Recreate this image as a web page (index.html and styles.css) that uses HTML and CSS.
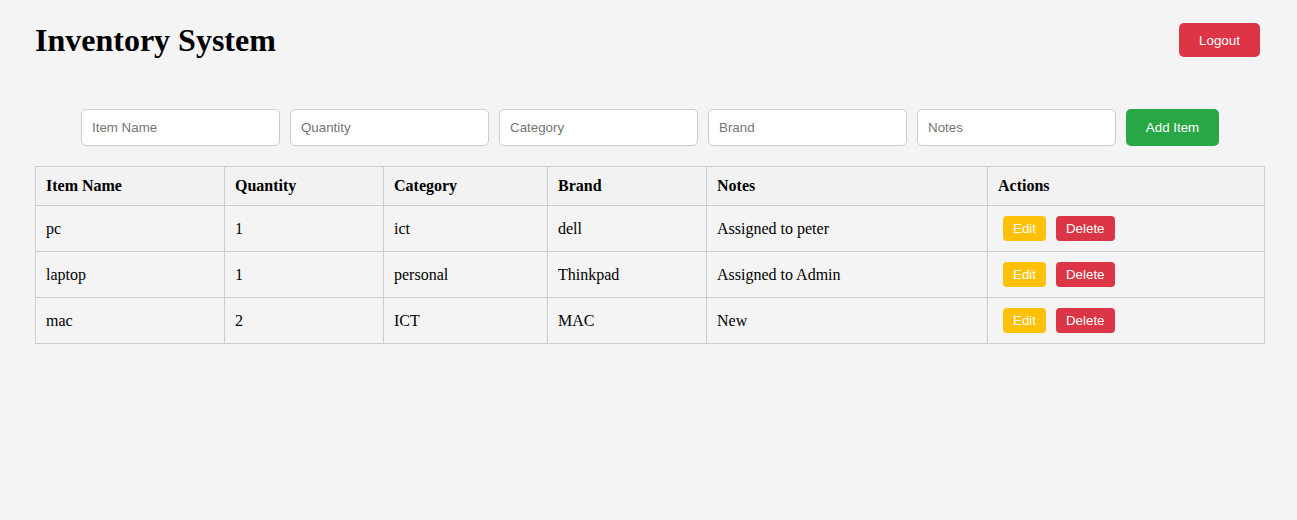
FILE: index.html
```html
<!DOCTYPE html>
<html>
<head>
<meta charset="utf-8">
<title>Inventory System</title>
<link rel="stylesheet" href="styles.css">
</head>
<body>
<div class="page">
  <header class="header">
    <h1 class="title">Inventory System</h1>
    <button class="btn btn-logout">Logout</button>
  </header>
  <form class="add-form">
    <input class="field" type="text" placeholder="Item Name">
    <input class="field" type="text" placeholder="Quantity">
    <input class="field" type="text" placeholder="Category">
    <input class="field" type="text" placeholder="Brand">
    <input class="field" type="text" placeholder="Notes">
    <button type="button" class="btn btn-add">Add Item</button>
  </form>
  <table class="items">
    <colgroup>
      <col class="c1"><col class="c2"><col class="c3"><col class="c4"><col class="c5"><col class="c6">
    </colgroup>
    <thead>
      <tr><th>Item Name</th><th>Quantity</th><th>Category</th><th>Brand</th><th>Notes</th><th>Actions</th></tr>
    </thead>
    <tbody>
      <tr><td>pc</td><td>1</td><td>ict</td><td>dell</td><td>Assigned to peter</td><td><button class="btn btn-edit">Edit</button><button class="btn btn-delete">Delete</button></td></tr>
      <tr><td>laptop</td><td>1</td><td>personal</td><td>Thinkpad</td><td>Assigned to Admin</td><td><button class="btn btn-edit">Edit</button><button class="btn btn-delete">Delete</button></td></tr>
      <tr><td>mac</td><td>2</td><td>ICT</td><td>MAC</td><td>New</td><td><button class="btn btn-edit">Edit</button><button class="btn btn-delete">Delete</button></td></tr>
    </tbody>
  </table>
</div>
</body>
</html>
```
FILE: styles.css
```css
html, body {
  margin: 0;
  padding: 0;
  background: #f4f4f4;
}
body {
  font-family: "Liberation Serif", "Times New Roman", serif;
  color: #000;
}
.page {
  width: 1230px;
  margin-left: 35px;
}
.header {
  display: flex;
  justify-content: space-between;
  align-items: center;
  height: 80px;
  padding-right: 5px;
}
.title {
  margin: 0;
  font-size: 32px;
  font-weight: bold;
  line-height: 37px;
}
.btn {
  font-family: "Liberation Sans", Arial, sans-serif;
  font-size: 13.333px;
  color: #fff;
  border: none;
  cursor: pointer;
  line-height: 15px;
}
.btn-logout {
  background: #dc3545;
  width: 81px;
  height: 34px;
  padding: 0;
  border-radius: 5px;
}
.add-form {
  display: flex;
  justify-content: center;
  gap: 10px;
  margin-top: 29px;
  height: 37px;
}
.field {
  box-sizing: border-box;
  width: 199px;
  height: 37px;
  padding: 10px;
  border: 1px solid #ccc;
  border-radius: 5px;
  background: #fff;
  font-family: "Liberation Sans", Arial, sans-serif;
  font-size: 13.333px;
  outline: none;
}
.field::placeholder {
  color: #757575;
}
.btn-add {
  background: #28a745;
  width: 93px;
  height: 37px;
  padding: 0;
  border-radius: 5px;
}
.items {
  margin-top: 20px;
  width: 1229px;
  border-collapse: collapse;
  table-layout: fixed;
}
.c1 { width: 189px; }
.c2 { width: 159px; }
.c3 { width: 164px; }
.c4 { width: 159px; }
.c5 { width: 281px; }
.c6 { width: 277px; }
.items th, .items td {
  border: 1px solid #ccc;
  padding: 10px;
  text-align: left;
  font-size: 16px;
  line-height: 18px;
}
.items th {
  background: #f2f2f2;
  font-weight: bold;
}
.items td {
  height: 25px;
}
.btn-edit, .btn-delete {
  height: 25px;
  padding: 0 10px;
  border-radius: 4px;
  margin: 0 5px;
  vertical-align: middle;
}
.btn-edit {
  background: #ffc107;
}
.btn-delete {
  background: #dc3545;
}
```
